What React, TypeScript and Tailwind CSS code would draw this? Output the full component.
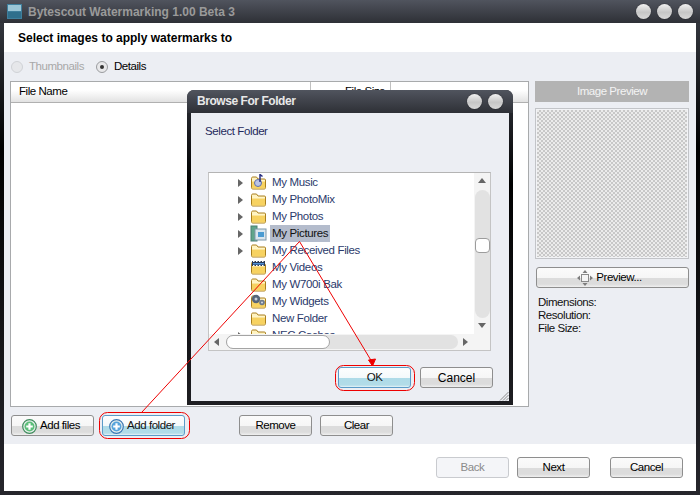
import React from 'react';

const font = 'font-["Liberation_Sans",Arial,sans-serif]';

function OrbButton() {
  return (
    <span className="block w-[15px] h-[15px] rounded-full bg-[linear-gradient(#f2f2f2,#c6c6c6_55%,#d8d8d8)] shadow-[0_0_1px_#111]" />
  );
}

function Radio({ checked, disabled }: { checked?: boolean; disabled?: boolean }) {
  return (
    <span
      className={
        disabled
          ? 'flex items-center justify-center w-[12px] h-[12px] shrink-0 rounded-full border border-[#d0d2d6] bg-[#e6e7ea]'
          : 'flex items-center justify-center w-[12px] h-[12px] shrink-0 rounded-full border border-[#9a9c9f] bg-[#e8e8ea]'
      }
    >
      {checked && <span className="block w-[4px] h-[4px] rounded-full bg-[#333]" />}
    </span>
  );
}

function Btn({
  className,
  active,
  disabled,
  children,
}: {
  className: string;
  active?: boolean;
  disabled?: boolean;
  children: React.ReactNode;
}) {
  let look = 'border-[#8e8e8e] bg-[linear-gradient(#fbfbfb_0,#f6f6f6_50%,#dcdcdc_52%,#dcdcdc_85%,#f0f0f0)] text-black';
  if (active) look = 'border-[#5b9bc8] bg-[linear-gradient(#fdfefe_0,#f4f9fb_50%,#aedbe8_52%,#b2dce8_90%,#e6f4f8)] text-[#111]';
  if (disabled) look = 'border-[#c9cbcf] bg-[#f4f5f8] text-[#8a8a8a]';
  return (
    <div className={`flex items-center justify-center gap-[3px] h-[21px] rounded-[3px] border text-[11.5px] tracking-[-0.45px] ${look} ${className}`}>
      {children}
    </div>
  );
}

function PlusIcon({ ring, fill }: { ring: string; fill: string }) {
  return (
    <svg width="15" height="15" viewBox="0 0 15 15">
      <circle cx="7.5" cy="7.5" r="6.8" fill="#e8f0ec" stroke={ring} strokeWidth="1.2" />
      <circle cx="7.5" cy="7.5" r="5" fill={fill} />
      <path d="M7.5 4.2v6.6M4.2 7.5h6.6" stroke="#fff" strokeWidth="2.2" />
    </svg>
  );
}

function MoveIcon() {
  return (
    <svg width="16" height="16" viewBox="0 0 16 16" fill="#7d7d7d">
      <rect x="4.5" y="4.5" width="7" height="7" fill="#f4f4f4" stroke="#8a8a8a" />
      <path d="M8 0l2.5 3h-5zM8 16l-2.5-3h5zM0 8l3-2.5v5zM16 8l-3 2.5v-5z" />
    </svg>
  );
}

function Folder() {
  return (
    <>
      <path d="M1.500 4.500v9.200c0 .7.500 1.300 1.200 1.300h11.600c.7 0 1.200-.6 1.200-1.300V6c0-.7-.5-1-1.200-1H8L6.500 3H3C2 3 1.500 3.500 1.500 4.500z" fill="#fff3c0" stroke="#a97f1e" />
      <path d="M2 7h13v6.500c0 .6-.4 1-1 1H3c-.6 0-1-.4-1-1z" fill="#f7d261" />
      <path d="M2 7h13" stroke="#fff6cf" />
    </>
  );
}

function TreeIcon({ kind }: { kind: string }) {
  if (kind === 'pictures') {
    return (
      <svg width="17" height="17" viewBox="0 0 17 17">
        <rect x="1" y="1" width="6" height="15" fill="#5fa58a" stroke="#4a7f72" />
        <rect x="5" y="4" width="11" height="11" fill="#d9e6ee" stroke="#7f97a8" />
        <rect x="8" y="7" width="6" height="5" fill="#4b9bd1" />
      </svg>
    );
  }
  if (kind === 'videos') {
    return (
      <svg width="17" height="17" viewBox="0 0 17 17">
        <Folder />
        <rect x="2" y="2" width="13" height="5" fill="#2a3a55" />
        <path d="M3 2.500h1.500M6 2.500h1.500M9 2.500h1.500M12 2.500h1.500M3 6.500h1.500M6 6.500h1.500M9 6.500h1.500M12 6.500h1.500" stroke="#fff" />
        <rect x="3" y="4" width="11" height="1.500" fill="#4f8fd6" />
      </svg>
    );
  }
  if (kind === 'widgets') {
    return (
      <svg width="17" height="17" viewBox="0 0 17 17">
        <Folder />
        <circle cx="6" cy="6" r="4.200" fill="#56657a" />
        <circle cx="6" cy="6" r="1.500" fill="#c7d0da" />
        <circle cx="12" cy="9.500" r="2.800" fill="#6d7a8c" />
        <circle cx="12" cy="9.500" r="1" fill="#d5dbe2" />
      </svg>
    );
  }
  if (kind === 'music') {
    return (
      <svg width="17" height="17" viewBox="0 0 17 17">
        <Folder />
        <circle cx="8" cy="9" r="3.500" fill="#b9c3e6" stroke="#5f6fa8" />
        <path d="M10 8V0.500l2.500 2" stroke="#2a2f80" strokeWidth="1.500" fill="none" />
      </svg>
    );
  }
  return (
    <svg width="17" height="17" viewBox="0 0 17 17">
      <Folder />
    </svg>
  );
}

const rows = [
  { name: 'My Music', icon: 'music', arrow: true },
  { name: 'My PhotoMix', icon: 'folder', arrow: true },
  { name: 'My Photos', icon: 'folder', arrow: true },
  { name: 'My Pictures', icon: 'pictures', arrow: true, selected: true },
  { name: 'My Received Files', icon: 'folder', arrow: true },
  { name: 'My Videos', icon: 'videos' },
  { name: 'My W700i Bak', icon: 'folder' },
  { name: 'My Widgets', icon: 'widgets' },
  { name: 'New Folder', icon: 'folder' },
  { name: 'NEC Caches', icon: 'folder', arrow: true },
];

function Arrow({ dir, className }: { dir: 'r' | 'l' | 'u' | 'd'; className?: string }) {
  const d = { r: 'M1 0l5 4-5 4z', l: 'M6 0l-5 4 5 4z', u: 'M0 6l4-5 4 5z', d: 'M0 1l4 5 4-5z' }[dir];
  return (
    <svg width="8" height="8" viewBox="0 0 8 8" className={className}>
      <path d={d} fill="#666" />
    </svg>
  );
}

function BrowseDialog() {
  return (
    <div className="absolute left-[187px] top-[90px] w-[326px] h-[315px] flex flex-col rounded-t-[7px] bg-[linear-gradient(#2e3138,#000_30%,#1e1e22)] overflow-hidden">
      <div className="flex items-center h-[23px] shrink-0 pl-[10px] pr-[10px] pb-[1px] bg-[linear-gradient(#50545e,#2e3036)]">
        <span className="text-[12px] font-bold text-[#e8e8e8]">Browse For Folder</span>
        <div className="ml-auto flex gap-[6px]">
          <OrbButton />
          <OrbButton />
        </div>
      </div>
      <div className="relative flex flex-col flex-1 mx-[4px] mb-[4px] bg-[#eceef3] pl-[14px] pr-[16px]">
        <div className="pt-[11px] text-[11.5px] tracking-[-0.4px] leading-[14px] text-[#1f2a5c]">Select Folder</div>
        <div className="mt-[34px] ml-[3px] w-[283px] h-[179px] border border-[#c4c4c4] border-t-[#b4b4b4] flex flex-col bg-white overflow-hidden">
          <div className="flex flex-1 min-h-0">
            <div className="flex-1 overflow-hidden pt-[1px]">
              {rows.map((r) => (
                <div key={r.name} className="relative flex items-center h-[17px] pl-[28px]">
                  <span className="w-[13px] shrink-0">{r.arrow && <Arrow dir="r" />}</span>
                  <TreeIcon kind={r.icon} />
                  <span
                    className={
                      r.selected
                        ? 'ml-[3px] px-[2px] h-[17px] leading-[17px] bg-[#b4bccc] text-[11.5px] tracking-[-0.35px] text-[#111]'
                        : 'ml-[5px] text-[11.5px] tracking-[-0.35px] leading-[17px] text-[#2b3a6b]'
                    }
                  >
                    {r.name}
                  </span>
                </div>
              ))}
            </div>
            <div className="flex flex-col items-center w-[16px] shrink-0 bg-[#f4f4f4]">
              <Arrow dir="u" className="mt-[4px]" />
              <div className="mt-[5px] w-[15px] h-[128px] rounded-full bg-[#e2e2e2] relative">
                <div className="absolute top-[48px] left-0 w-[15px] h-[15px] rounded-[4px] border border-[#9c9c9c] bg-white" />
              </div>
              <Arrow dir="d" className="mt-[4px]" />
            </div>
          </div>
          <div className="flex items-center h-[16px] shrink-0 bg-[#f4f4f4]">
            <Arrow dir="l" className="ml-[4px]" />
            <div className="ml-[5px] w-[232px] h-[14px] rounded-full bg-[#e2e2e2]">
              <div className="w-[104px] h-[14px] rounded-full border border-[#a4a4a4] bg-white" />
            </div>
            <Arrow dir="r" className="ml-[4px]" />
          </div>
        </div>
        <div className="flex justify-end gap-[9px] mt-[16px]">
          <Btn active className="w-[73px] text-[#111] pt-[1px]">OK</Btn>
          <Btn className="w-[73px] text-[#1f2a5c] pt-[1px]">
            <span className="text-[12px] tracking-[0px]">Cancel</span>
          </Btn>
        </div>
        <svg width="10" height="10" viewBox="0 0 10 10" className="absolute right-0 bottom-0">
          <path d="M9.500 1L1 9.500M9.500 4L4 9.500M9.500 7L7 9.500" stroke="#8a8a8a" />
        </svg>
      </div>
    </div>
  );
}

function Annotations() {
  return (
    <svg width="700" height="495" className="absolute left-0 top-0 pointer-events-none" fill="none" stroke="#ee0000">
      <path d="M299.500 241.500L142 412M299.500 241.500L372 362" />
      <path d="M372.500 366l-4-6 7-1z" fill="#ee0000" />
      <rect x="99.500" y="412.500" width="90" height="26" rx="8" />
      <rect x="335.500" y="365.500" width="79" height="25" rx="8" />
    </svg>
  );
}

export default function App() {
  return (
    <div className={`relative w-[700px] h-[495px] flex flex-col overflow-hidden bg-[linear-gradient(#3c4048,#000_30%,#26262c)] text-[11.5px] tracking-[-0.45px] text-black ${font}`}>
      <div className="flex items-center h-[23px] shrink-0 pl-[7px] pr-[7px] bg-[linear-gradient(#50545e,#2e3036)]">
        <svg width="15" height="15" viewBox="0 0 15 15">
          <rect width="15" height="15" fill="#3f7f9c" />
          <rect x="1" y="1" width="13" height="6" fill="#9cc6d6" />
          <rect x="1" y="8" width="13" height="6" fill="#2f6f8c" />
        </svg>
        <span className="ml-[6px] text-[12px] tracking-[0px] font-bold text-[#9a9a9a]">Bytescout Watermarking 1.00 Beta 3</span>
        <div className="ml-auto flex gap-[6px]">
          <OrbButton />
          <OrbButton />
          <OrbButton />
        </div>
      </div>

      <div className="flex flex-col flex-1 mx-[4px] mb-[4px] bg-white min-h-0">
        <div className="flex items-center h-[29px] shrink-0 pl-[14px] text-[12px] tracking-[0px] font-bold text-black">
          Select images to apply watermarks to
        </div>

        <div className="flex flex-col h-[392px] shrink-0 bg-[#eceef3] px-[6px]">
          <div className="flex items-center h-[29px] shrink-0 pl-[1px]">
            <Radio disabled />
            <span className="ml-[6px] w-[67px] pt-[1px] text-[#a8a8a8]">Thumbnails</span>
            <Radio checked />
            <span className="ml-[6px] pt-[1px]">Details</span>
          </div>
          <div className="flex gap-[6px] h-[326px] shrink-0">
            <div className="flex flex-col w-[519px] shrink-0 border border-[#a8aaac] bg-white">
              <div className="flex h-[21px] shrink-0 border-b border-[#b0b0b0] bg-[linear-gradient(#fff_40%,#e2e2e2)]">
                <div className="w-[300px] pl-[8px] pt-[1px] border-r border-[#c0c0c0]">File Name</div>
                <div className="w-[80px] pl-[34px] pt-[1px] border-r border-[#c0c0c0] whitespace-nowrap overflow-hidden">File Size</div>
              </div>
            </div>
            <div className="flex flex-col flex-1 pr-[2px]">
              <div className="flex items-center justify-center h-[21px] pt-[1px] shrink-0 bg-[#b3b3b3] text-[#f4f4f4]">Image Preview</div>
              <div className="mt-[6px] h-[151px] shrink-0 border border-[#c2c4c8] p-[1px] bg-[#f2f3f6]">
                <div className="w-full h-full bg-[repeating-conic-gradient(#c8c8c8_0_25%,#ececec_0_50%)] bg-[length:4px_4px]" />
              </div>
              <Btn className="mt-[8px] w-[153px] ml-[1px] pr-[6px]">
                <MoveIcon />
                <span>Preview...</span>
              </Btn>
              <div className="mt-[8px] pl-[3px] leading-[13px] text-[#111]">
                <div>Dimensions:</div>
                <div>Resolution:</div>
                <div>File Size:</div>
              </div>
            </div>
          </div>
          <div className="flex items-center mt-[8px] pl-[1px]">
            <Btn className="w-[83px] pr-[3px] pt-[1px]">
              <PlusIcon ring="#3d8a5c" fill="#5cbf7a" />
              <span>Add files</span>
            </Btn>
            <Btn active className="w-[83px] ml-[8px] pr-[3px] pt-[1px]">
              <PlusIcon ring="#3a78b4" fill="#57a4dc" />
              <span>Add folder</span>
            </Btn>
            <Btn className="w-[73px] ml-[54px] pt-[1px]">Remove</Btn>
            <Btn className="w-[73px] ml-[8px] pt-[1px]">Clear</Btn>
          </div>
        </div>

        <div className="flex items-start pt-[13px] pl-[432px] flex-1">
          <Btn disabled className="w-[73px] pt-[1px]">Back</Btn>
          <Btn className="w-[73px] ml-[8px] pt-[1px]">Next</Btn>
          <Btn className="w-[73px] ml-[20px] pt-[1px]">Cancel</Btn>
        </div>
      </div>

      <BrowseDialog />
      <Annotations />
    </div>
  );
}
